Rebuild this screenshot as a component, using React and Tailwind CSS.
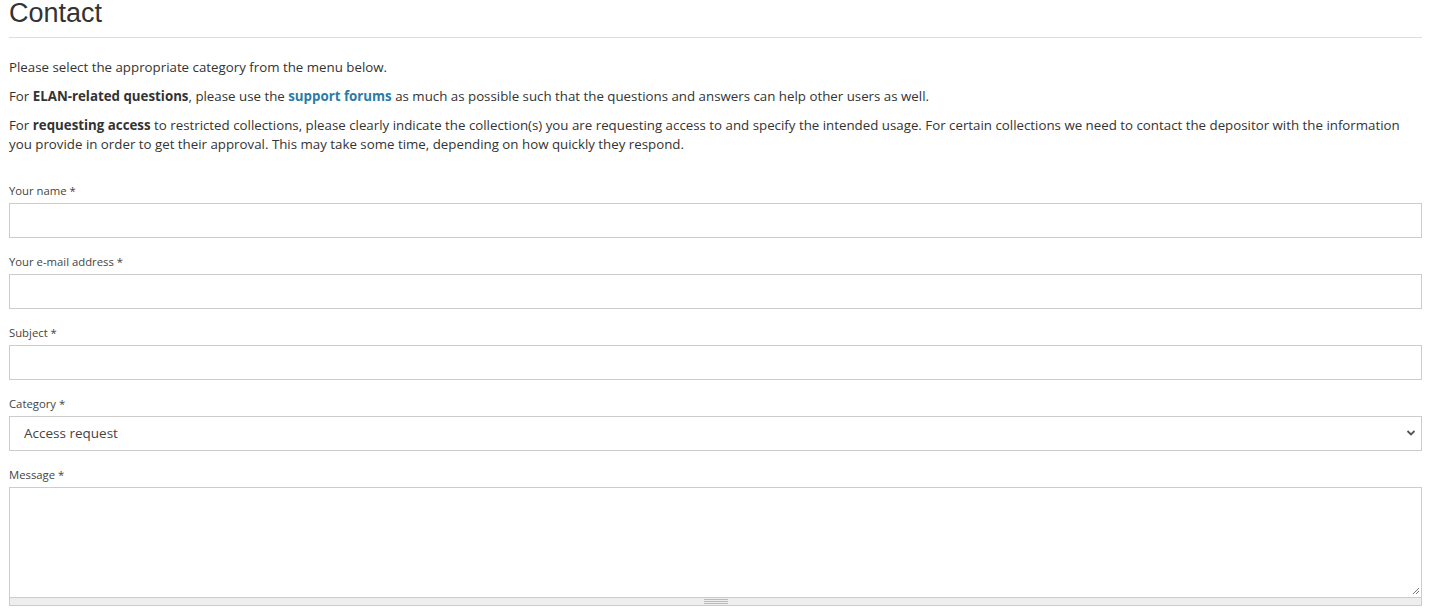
import React from "react";

function Field({ label, children }) {
  return (
    <div className="mb-[17px]">
      <label className="block text-[11.3px] leading-[13px] mb-[6px] text-[#444]">{label} *</label>
      {children}
    </div>
  );
}

export default function App() {
  return (
    <div className="bg-white min-h-screen px-[9px] text-[#333]" style={{ fontFamily: '"Open Sans", "Noto Sans", sans-serif' }}>
      <h1 className="text-[27px] leading-[27px] pt-0 pb-[10px] border-b border-[#dedede] text-[#333]" style={{ fontFamily: '"Liberation Sans", Arial, sans-serif' }}>
        Contact
      </h1>

      <div className="text-[13.3px] leading-[19px] mt-[20px]">
        <p className="mb-[10px]">Please select the appropriate category from the menu below.</p>
        <p className="mb-[10px]">
          For <b>ELAN-related questions</b>, please use the{" "}
          <a href="#" className="font-bold text-[#2a7ca8]">support forums</a> as much as possible such that the questions and
          answers can help other users as well.
        </p>
        <p>
          For <b>requesting access</b> to restricted collections, please clearly indicate the collection(s) you are requesting
          access to and specify the intended usage. For certain collections we need to contact the depositor with the information
          you provide in order to get their approval. This may take some time, depending on how quickly they respond.
        </p>
      </div>

      <form className="mt-[30px]">
        <Field label="Your name">
          <input className="block w-full h-[35px] border border-[#ccc] outline-none" />
        </Field>
        <Field label="Your e-mail address">
          <input className="block w-full h-[35px] border border-[#ccc] outline-none" />
        </Field>
        <Field label="Subject">
          <input className="block w-full h-[35px] border border-[#ccc] outline-none" />
        </Field>
        <Field label="Category">
          <div className="relative">
            <select className="block w-full h-[35px] border border-[#ccc] pl-[14px] text-[13.5px] text-[#444] appearance-none bg-white outline-none">
              <option>Access request</option>
            </select>
            <svg className="absolute right-[6px] top-[13px] pointer-events-none" width="10" height="8" viewBox="0 0 10 8">
              <path d="M1.5 2 L5 5.5 L8.5 2" fill="none" stroke="#555" strokeWidth="1.8" />
            </svg>
          </div>
        </Field>
        <div>
          <label className="block text-[11.3px] leading-[13px] mb-[6px] text-[#444]">Message *</label>
          <div className="relative">
            <textarea className="block w-full h-[110px] border border-[#ccc] border-b-0 outline-none resize-none" />
            <svg className="absolute right-[2px] bottom-[2px] pointer-events-none" width="8" height="8" viewBox="0 0 8 8">
              <path d="M7 1 L1 7 M7 4 L4 7" stroke="#777" strokeWidth="1" />
            </svg>
          </div>
          <div className="h-[9px] bg-[#eee] border border-[#ccc] flex justify-center items-center">
            <div className="w-[24px] flex flex-col gap-[1px]">
              <div className="h-px bg-[#bbb]" />
              <div className="h-px bg-[#bbb]" />
              <div className="h-px bg-[#bbb]" />
            </div>
          </div>
        </div>
      </form>
    </div>
  );
}
